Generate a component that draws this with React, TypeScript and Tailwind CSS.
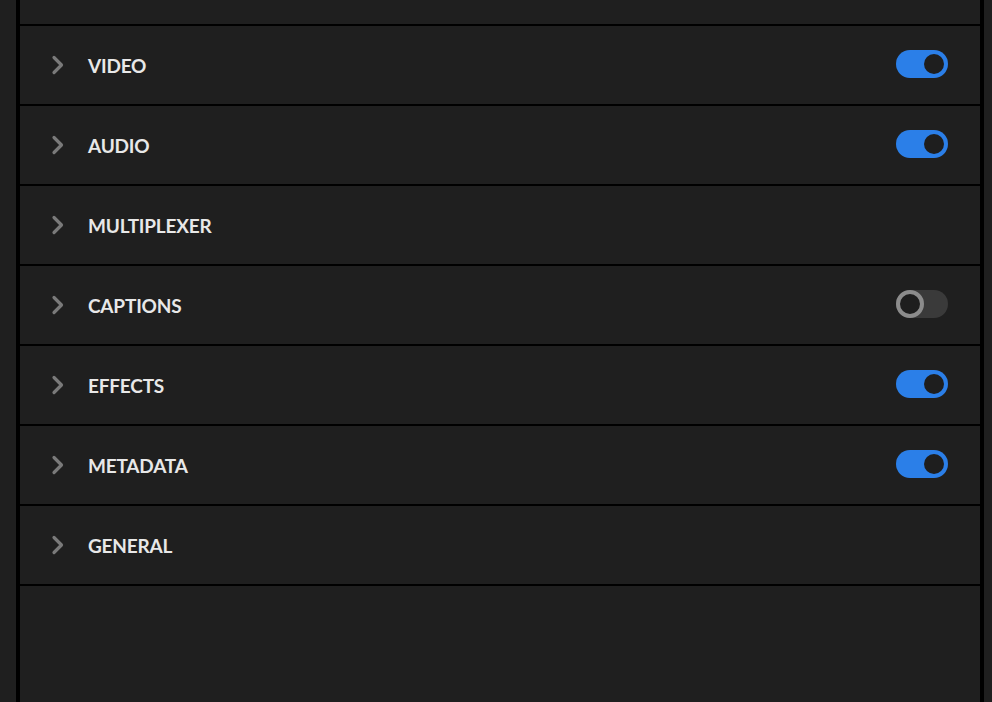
type Section = { label: string; toggle?: boolean; on?: boolean };

const sections: Section[] = [
  { label: "VIDEO", toggle: true, on: true },
  { label: "AUDIO", toggle: true, on: true },
  { label: "MULTIPLEXER" },
  { label: "CAPTIONS", toggle: true, on: false },
  { label: "EFFECTS", toggle: true, on: true },
  { label: "METADATA", toggle: true, on: true },
  { label: "GENERAL" },
];

function Chevron() {
  return (
    <svg width="16" height="20" viewBox="0 0 16 20" className="shrink-0 text-[#7a7a7a]">
      <path
        d="M4 2.5 L11.5 10 L4 17.5"
        fill="none"
        stroke="currentColor"
        strokeWidth="3.2"
        strokeLinecap="round"
        strokeLinejoin="round"
      />
    </svg>
  );
}

function Toggle({ on }: { on: boolean }) {
  return on ? (
    <span className="mb-[2px] flex h-[28px] w-[52px] items-center justify-end rounded-full bg-[#2b7fe8] pr-[4px]">
      <span className="h-[20px] w-[20px] rounded-full bg-[#1e1e1e]" />
    </span>
  ) : (
    <span className="mb-[2px] flex h-[28px] w-[52px] items-center rounded-full bg-[#3a3a3a]">
      <span className="h-[28px] w-[28px] rounded-full border-[4px] border-[#8c8c8c] bg-[#1e1e1e]" />
    </span>
  );
}

export default function App() {
  return (
    <div
      className="flex h-[702px] w-full bg-[#1f1f1f] pl-[16px] pr-[8px]"
      style={{ fontFamily: "Lato, 'Open Sans', sans-serif" }}
    >
      <div className="flex flex-1 flex-col border-x-[4px] border-black bg-[#1f1f1f]">
        <div className="h-[26px] border-b-[2px] border-black" />
        {sections.map((s) => (
          <div
            key={s.label}
            className="flex h-[80px] items-center border-b-[2px] border-black pl-[30px] pr-[32px]"
          >
            <Chevron />
            <span className="ml-[22px] pt-[2px] text-[19px] font-bold tracking-[-0.2px] text-[#e8e8e8]">
              {s.label}
            </span>
            <span className="flex-1" />
            {s.toggle && <Toggle on={!!s.on} />}
          </div>
        ))}
      </div>
    </div>
  );
}
